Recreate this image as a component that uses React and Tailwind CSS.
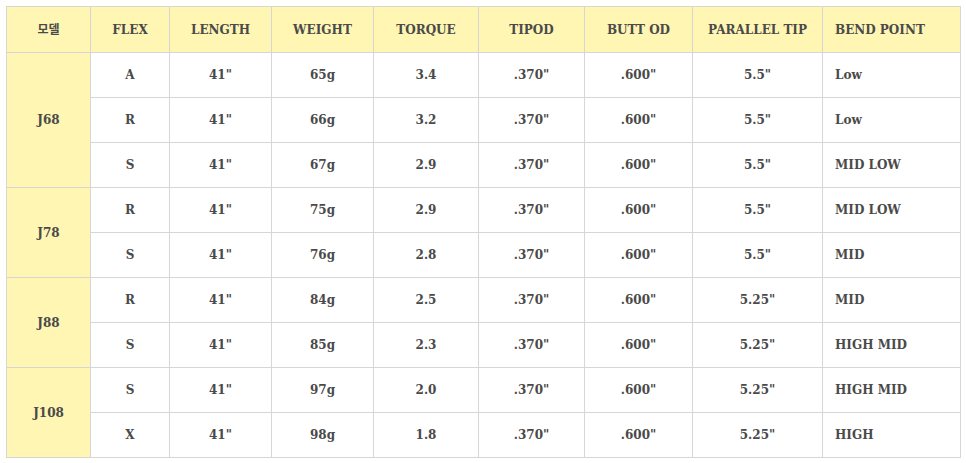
import React from "react";

const columns = [
  { label: "모델", width: "w-[84px]" },
  { label: "FLEX", width: "w-[79px]" },
  { label: "LENGTH", width: "w-[102px]" },
  { label: "WEIGHT", width: "w-[102px]" },
  { label: "TORQUE", width: "w-[105px]" },
  { label: "TIPOD", width: "w-[106px]" },
  { label: "BUTT OD", width: "w-[108px]" },
  { label: "PARALLEL TIP", width: "w-[130px]" },
  { label: "BEND POINT", width: "w-[138px]", left: true },
];

const models = [
  {
    name: "J68",
    rows: [
      ["A", "41\"", "65g", "3.4", ".370\"", ".600\"", "5.5\"", "Low"],
      ["R", "41\"", "66g", "3.2", ".370\"", ".600\"", "5.5\"", "Low"],
      ["S", "41\"", "67g", "2.9", ".370\"", ".600\"", "5.5\"", "MID LOW"],
    ],
  },
  {
    name: "J78",
    rows: [
      ["R", "41\"", "75g", "2.9", ".370\"", ".600\"", "5.5\"", "MID LOW"],
      ["S", "41\"", "76g", "2.8", ".370\"", ".600\"", "5.5\"", "MID"],
    ],
  },
  {
    name: "J88",
    rows: [
      ["R", "41\"", "84g", "2.5", ".370\"", ".600\"", "5.25\"", "MID"],
      ["S", "41\"", "85g", "2.3", ".370\"", ".600\"", "5.25\"", "HIGH MID"],
    ],
  },
  {
    name: "J108",
    rows: [
      ["S", "41\"", "97g", "2.0", ".370\"", ".600\"", "5.25\"", "HIGH MID"],
      ["X", "41\"", "98g", "1.8", ".370\"", ".600\"", "5.25\"", "HIGH"],
    ],
  },
];

const cell = "border border-[#d6d6d6] h-[45px] p-0 align-middle";

export default function App() {
  return (
    <div className="bg-white w-[966px] h-[463px] pt-[6px] pl-[6px] font-['DejaVu_Serif','Noto_Sans_CJK_KR',serif] text-[12px] font-bold text-[#4a4a4a]">
      <table className="border-collapse table-fixed w-[955px]">
        <thead>
          <tr className="bg-[#fff6b3]">
            {columns.map((col) => (
              <th
                key={col.label}
                className={`${cell} h-[46px] font-bold ${col.width} ${
                  col.left ? "text-left pl-3" : "text-center"
                }`}
              >
                {col.label}
              </th>
            ))}
          </tr>
        </thead>
        <tbody>
          {models.map((model) =>
            model.rows.map((row, i) => (
              <tr key={model.name + i}>
                {i === 0 && (
                  <td
                    rowSpan={model.rows.length}
                    className={`${cell} bg-[#fff6b3] text-center`}
                  >
                    {model.name}
                  </td>
                )}
                {row.map((value, j) => (
                  <td
                    key={j}
                    className={`${cell} ${
                      j === row.length - 1 ? "text-left pl-3" : "text-center"
                    }`}
                  >
                    {value}
                  </td>
                ))}
              </tr>
            ))
          )}
        </tbody>
      </table>
    </div>
  );
}
